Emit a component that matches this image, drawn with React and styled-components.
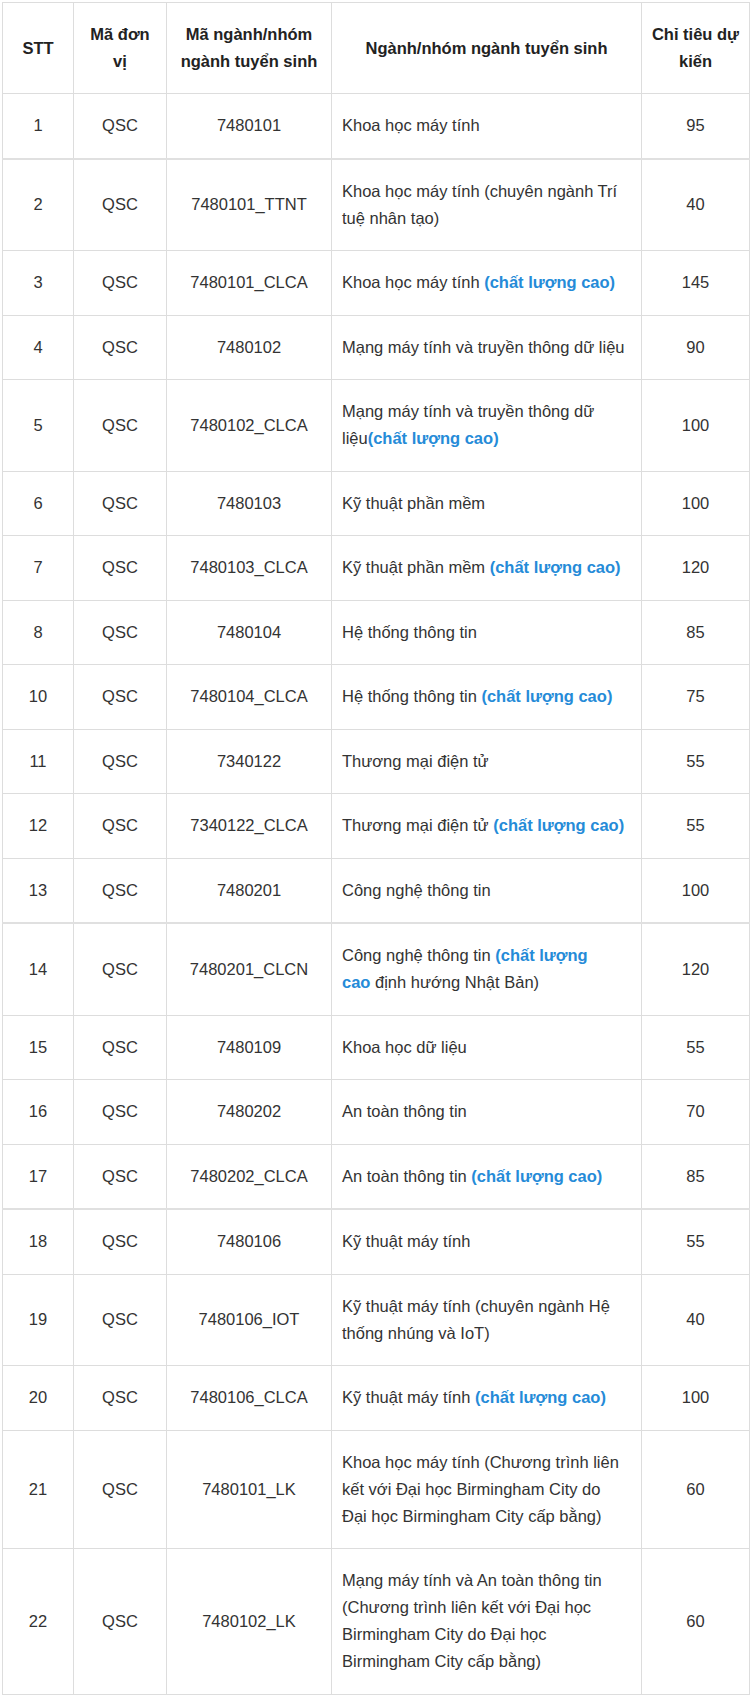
import styled, { createGlobalStyle } from "styled-components";

const GlobalStyle = createGlobalStyle`
  html, body {
    margin: 0;
    padding: 0;
    background: #ffffff;
  }
  body {
    font-family: "Liberation Sans", Arial, "Noto Sans", sans-serif;
    color: #333333;
  }
`;

const widths = [71, 93, 165, 310, 108];

// name: array of lines, each line is a list of [text, highlight?] parts
const rows = [
  { stt: "1", code: "7480101", name: [[["Khoa học máy tính"]]], quota: "95" },
  { stt: "2", code: "7480101_TTNT", name: [[["Khoa học máy tính (chuyên ngành Trí"]], [["tuệ nhân tạo)"]]], quota: "40", seam: true },
  { stt: "3", code: "7480101_CLCA", name: [[["Khoa học máy tính "], ["(chất lượng cao)", true]]], quota: "145" },
  { stt: "4", code: "7480102", name: [[["Mạng máy tính và truyền thông dữ liệu"]]], quota: "90" },
  { stt: "5", code: "7480102_CLCA", name: [[["Mạng máy tính và truyền thông dữ"]], [["liệu"], ["(chất lượng cao)", true]]], quota: "100" },
  { stt: "6", code: "7480103", name: [[["Kỹ thuật phần mềm"]]], quota: "100" },
  { stt: "7", code: "7480103_CLCA", name: [[["Kỹ thuật phần mềm "], ["(chất lượng cao)", true]]], quota: "120" },
  { stt: "8", code: "7480104", name: [[["Hệ thống thông tin"]]], quota: "85" },
  { stt: "10", code: "7480104_CLCA", name: [[["Hệ thống thông tin "], ["(chất lượng cao)", true]]], quota: "75" },
  { stt: "11", code: "7340122", name: [[["Thương mại điện tử"]]], quota: "55" },
  { stt: "12", code: "7340122_CLCA", name: [[["Thương mại điện tử "], ["(chất lượng cao)", true]]], quota: "55" },
  { stt: "13", code: "7480201", name: [[["Công nghệ thông tin"]]], quota: "100" },
  { stt: "14", code: "7480201_CLCN", name: [[["Công nghệ thông tin "], ["(chất lượng", true]], [["cao", true], [" định hướng Nhật Bản)"]]], quota: "120", seam: true },
  { stt: "15", code: "7480109", name: [[["Khoa học dữ liệu"]]], quota: "55" },
  { stt: "16", code: "7480202", name: [[["An toàn thông tin"]]], quota: "70" },
  { stt: "17", code: "7480202_CLCA", name: [[["An toàn thông tin "], ["(chất lượng cao)", true]]], quota: "85" },
  { stt: "18", code: "7480106", name: [[["Kỹ thuật máy tính"]]], quota: "55", seam: true },
  { stt: "19", code: "7480106_IOT", name: [[["Kỹ thuật máy tính (chuyên ngành Hệ"]], [["thống nhúng và IoT)"]]], quota: "40" },
  { stt: "20", code: "7480106_CLCA", name: [[["Kỹ thuật máy tính "], ["(chất lượng cao)", true]]], quota: "100" },
  {
    stt: "21",
    code: "7480101_LK",
    name: [
      [["Khoa học máy tính (Chương trình liên"]],
      [["kết với Đại học Birmingham City do"]],
      [["Đại học Birmingham City cấp bằng)"]],
    ],
    quota: "60",
  },
  {
    stt: "22",
    code: "7480102_LK",
    name: [
      [["Mạng máy tính và An toàn thông tin"]],
      [["(Chương trình liên kết với Đại học"]],
      [["Birmingham City do Đại học"]],
      [["Birmingham City cấp bằng)"]],
    ],
    quota: "60",
  },
];

const Page = styled.div`
  padding: 2px 1px 0 2px;
`;

const Table = styled.table`
  width: 747px;
  border-collapse: collapse;
  table-layout: fixed;
  font-size: 16.5px;
  line-height: 27px;
`;

const HeadCell = styled.th`
  border: 1px solid #dddddd;
  padding: 18px 8px 18px;
  font-weight: bold;
  color: #222222;
  text-align: center;
  vertical-align: middle;
`;

const Row = styled.tr`
  border-top: ${(p) => (p.$seam ? "2px solid #e0e0e0" : "1px solid #dddddd")};
`;

const Cell = styled.td`
  border: 1px solid #dddddd;
  padding: 18px 10px 18.5px;
  text-align: ${(p) => p.$align || "center"};
  vertical-align: middle;
  color: #333333;
  white-space: nowrap;
`;

const Highlight = styled.strong`
  color: #258bd8;
  font-weight: bold;
`;

const App = () => {
  return (
    <Page>
      <GlobalStyle />
      <Table>
        <colgroup>
          {widths.map((w, i) => (
            <col key={i} style={{ width: w }} />
          ))}
        </colgroup>
        <thead>
          <tr>
            <HeadCell>STT</HeadCell>
            <HeadCell>
              Mã đơn
              <br />
              vị
            </HeadCell>
            <HeadCell>
              Mã ngành/nhóm
              <br />
              ngành tuyển sinh
            </HeadCell>
            <HeadCell>Ngành/nhóm ngành tuyển sinh</HeadCell>
            <HeadCell>
              Chỉ tiêu dự
              <br />
              kiến
            </HeadCell>
          </tr>
        </thead>
        <tbody>
          {rows.map((r) => (
            <Row key={r.stt} $seam={r.seam}>
              <Cell>{r.stt}</Cell>
              <Cell>QSC</Cell>
              <Cell>{r.code}</Cell>
              <Cell $align="left">
                {r.name.map((line, li) => (
                  <span key={li}>
                    {li > 0 && <br />}
                    {line.map(([t, hl], pi) =>
                      hl ? <Highlight key={pi}>{t}</Highlight> : <span key={pi}>{t}</span>
                    )}
                  </span>
                ))}
              </Cell>
              <Cell>{r.quota}</Cell>
            </Row>
          ))}
        </tbody>
      </Table>
    </Page>
  );
};

export default App;
